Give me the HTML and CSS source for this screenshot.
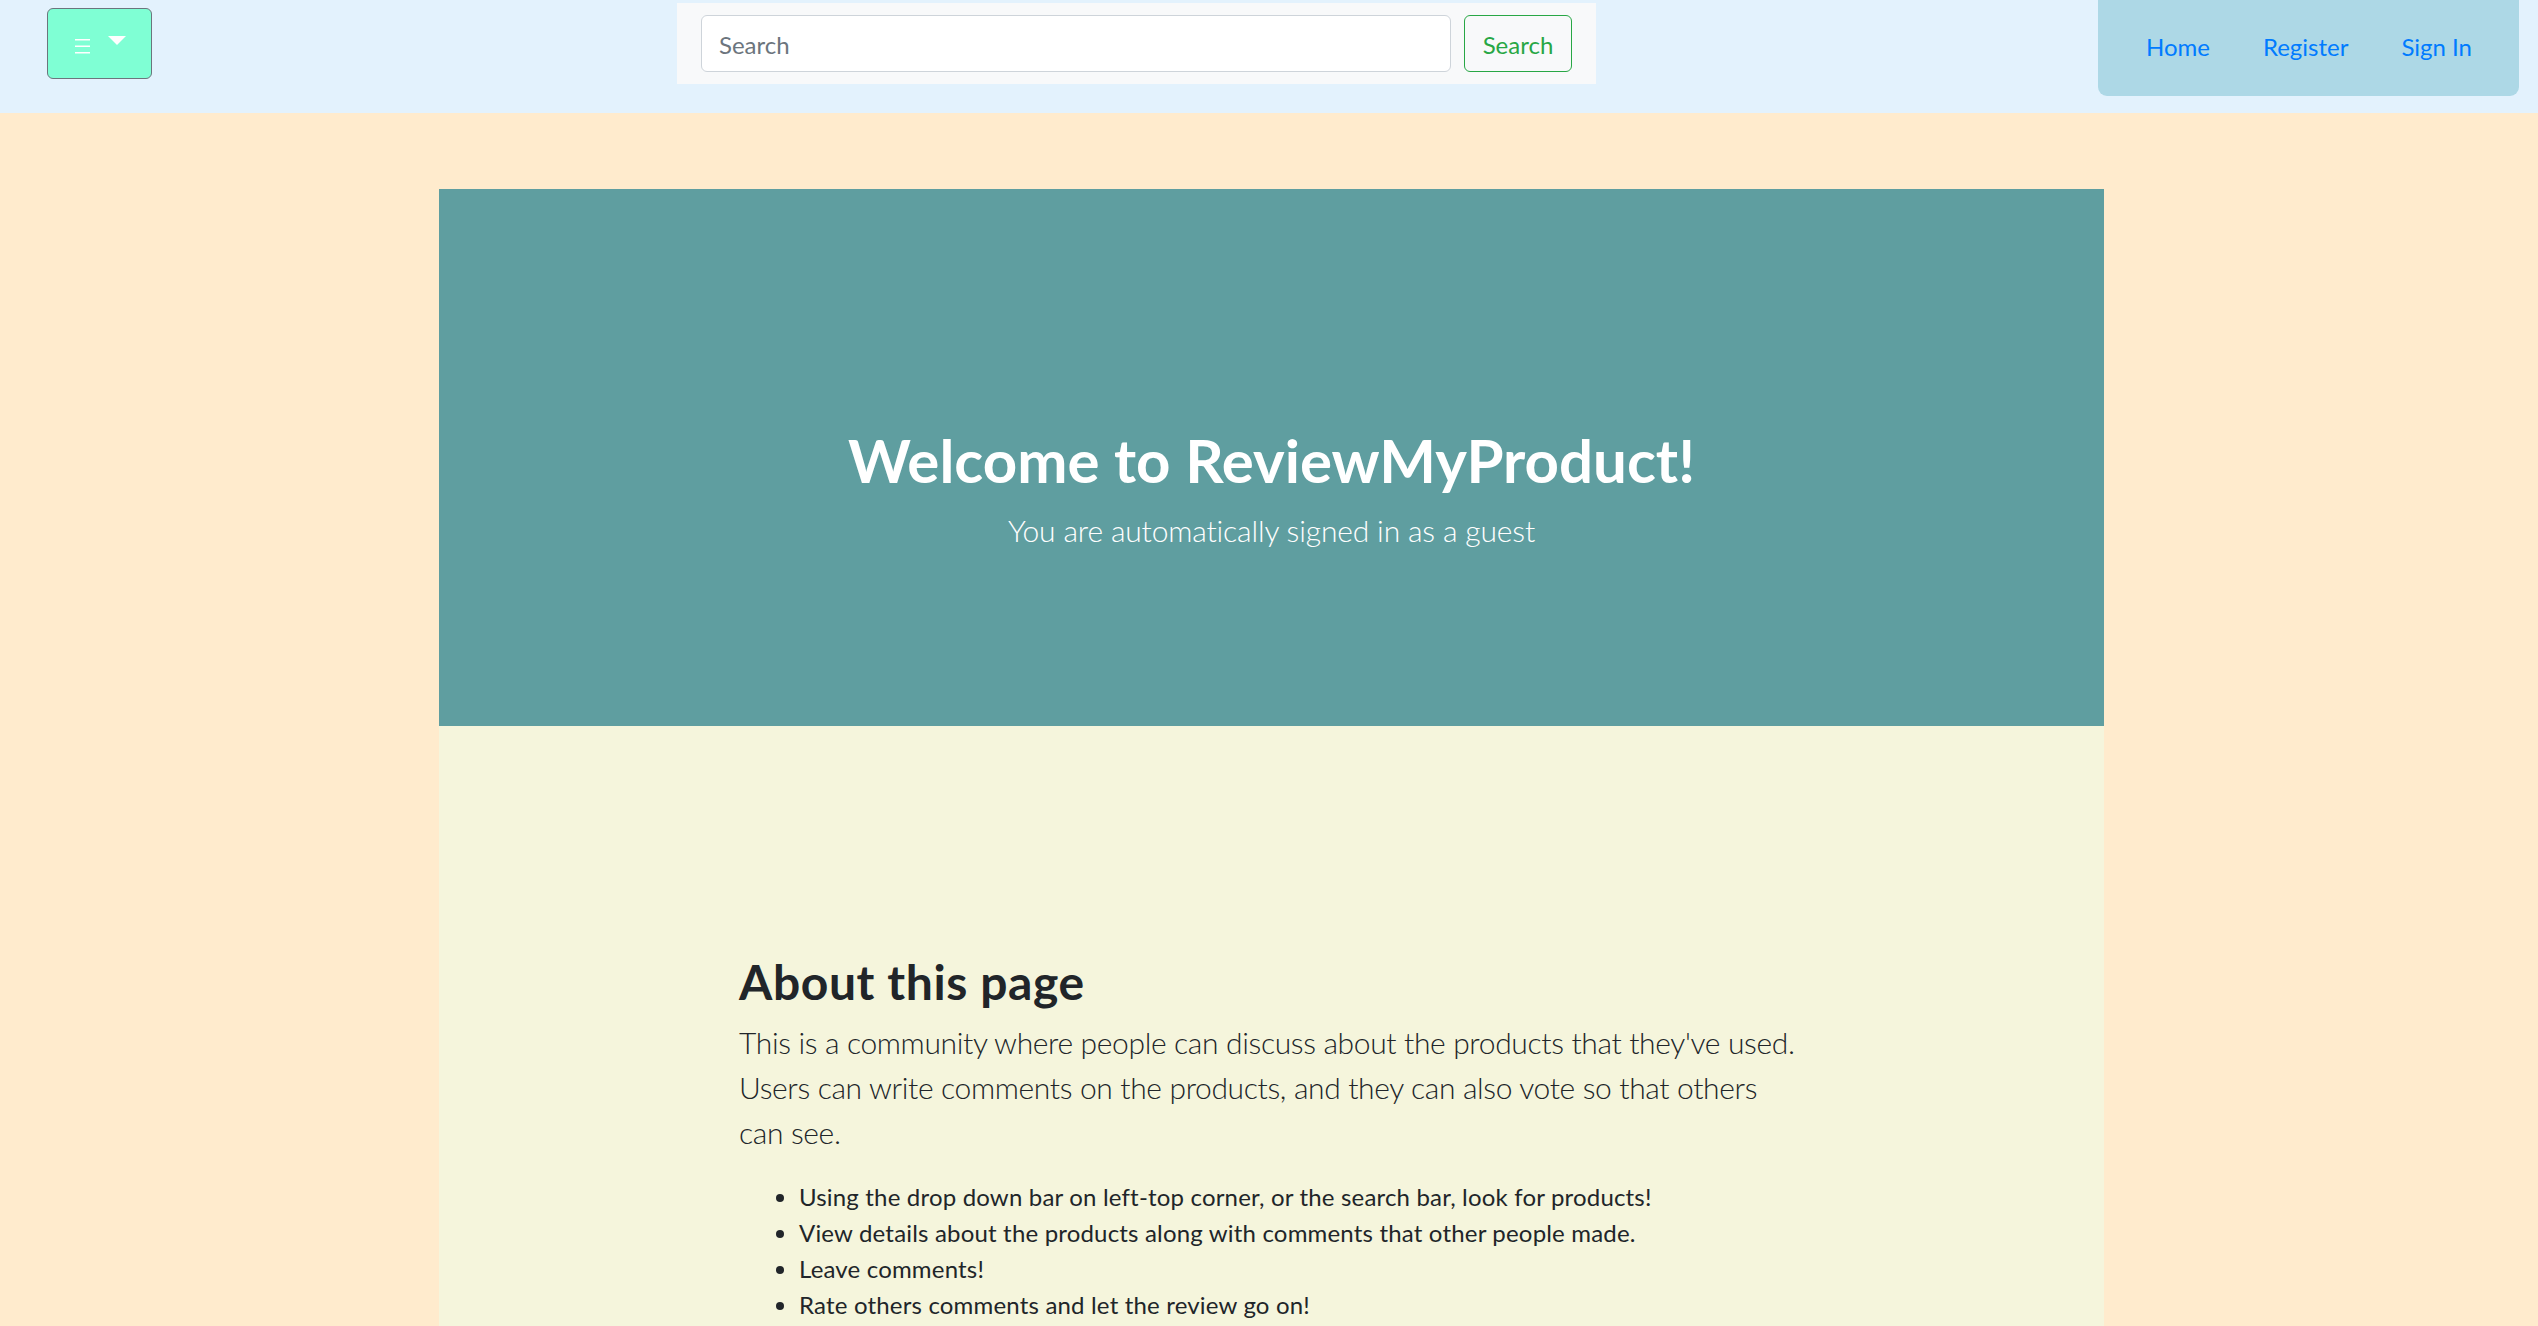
FILE: index.html
```html
<!DOCTYPE html>
<html lang="en">
<head>
<meta charset="utf-8">
<title>ReviewMyProduct</title>
<link rel="stylesheet" href="styles.css">
</head>
<body>
<header class="navbar">
  <button class="menu-btn" type="button" aria-label="Menu">
    <svg class="menu-icon" width="15" height="15" viewBox="0 0 15 15" aria-hidden="true">
      <rect x="0" y="0" width="15" height="1.5" fill="#fff"/>
      <rect x="0" y="6.5" width="15" height="1.5" fill="#fff"/>
      <rect x="0" y="13" width="15" height="1.5" fill="#fff"/>
    </svg>
    <span class="caret"></span>
  </button>
  <form class="search-form" onsubmit="return false">
    <input class="search-input" type="search" placeholder="Search">
    <button class="search-btn" type="submit">Search</button>
  </form>
  <nav class="nav-box">
    <a class="nav-link" href="#">Home</a>
    <a class="nav-link" href="#">Register</a>
    <a class="nav-link" href="#">Sign In</a>
  </nav>
</header>
<main class="page">
  <section class="hero">
    <h1 class="hero-title">Welcome to ReviewMyProduct!</h1>
    <p class="hero-lead">You are automatically signed in as a guest</p>
  </section>
  <section class="about">
    <div class="about-col">
      <h2 class="about-title">About this page</h2>
      <p class="about-lead">This is a community where people can discuss about the products that they've used. Users can write comments on the products, and they can also vote so that others can see.</p>
      <ul class="about-list">
        <li>Using the drop down bar on left-top corner, or the search bar, look for products!</li>
        <li>View details about the products along with comments that other people made.</li>
        <li>Leave comments!</li>
        <li>Rate others comments and let the review go on!</li>
      </ul>
    </div>
  </section>
</main>
</body>
</html>
```

FILE: styles.css
```css
* { box-sizing: border-box; }

html, body {
  margin: 0;
  padding: 0;
}

body {
  background: #ffebcd;
  font-family: "Lato", "Open Sans", "Noto Sans", sans-serif;
  color: #212529;
  font-size: 24px;
  line-height: 1.5;
}

.navbar {
  display: flex;
  align-items: flex-start;
  height: 113px;
  background: #e3f2fd;
}

.menu-btn {
  margin: 8px 0 0 47px;
  width: 105px;
  height: 71px;
  background: #7fffd4;
  border: 1.5px solid #6c757d;
  border-radius: 6px;
  display: flex;
  align-items: center;
  justify-content: center;
  gap: 18px;
  padding: 0 0 0 2px;
  cursor: pointer;
}

.menu-icon {
  display: block;
  margin-top: 5px;
}

.caret {
  display: block;
  width: 0;
  height: 0;
  border-top: 9px solid #fff;
  border-left: 9px solid transparent;
  border-right: 9px solid transparent;
  margin-top: -7px;
}

.search-form {
  margin: 3px 0 0 525px;
  width: 919px;
  height: 81px;
  background: #f8f9fa;
  display: flex;
  align-items: center;
  gap: 13px;
  padding: 0 24px;
}

.search-input {
  width: 750px;
  height: 57px;
  border: 1.5px solid #ced4da;
  border-radius: 6px;
  background: #fff;
  padding: 2px 17px 0;
  font-family: inherit;
  font-size: 24px;
  color: #495057;
  outline: none;
}

.search-input::placeholder {
  color: #6c757d;
}

.search-btn {
  width: 108px;
  height: 57px;
  border: 1.5px solid #28a745;
  border-radius: 6px;
  background: transparent;
  color: #28a745;
  font-family: inherit;
  font-size: 24px;
  padding: 2px 0 0;
  cursor: pointer;
}

.nav-box {
  margin-left: auto;
  margin-right: 19px;
  width: 421px;
  height: 96px;
  background: #add8e6;
  border-radius: 0 0 9px 9px;
  display: flex;
  align-items: center;
  justify-content: space-between;
  padding: 0 47px 3px 48px;
}

.nav-link {
  color: #007bff;
  text-decoration: none;
  font-size: 24px;
  line-height: 36px;
}

.page {
  width: 1665px;
  margin: 76px 0 0 439px;
}

.hero {
  height: 537px;
  background: #5f9ea0;
  color: #fff;
  text-align: center;
  padding-top: 235px;
}

.hero-title {
  margin: 0 0 12px;
  font-size: 60px;
  font-weight: 700;
  line-height: 72px;
}

.hero-lead {
  margin: 0;
  font-size: 30px;
  font-weight: 300;
  line-height: 45px;
  letter-spacing: -0.15px;
}

.about {
  background: #f5f5dc;
  padding: 227px 0 120px;
}

.about-col {
  width: 1060px;
  margin-left: 300px;
}

.about-title {
  margin: 0 0 9px;
  font-size: 48px;
  font-weight: 700;
  line-height: 57.6px;
  letter-spacing: 0.6px;
}

.about-lead {
  margin: 0 0 24px;
  font-size: 30px;
  font-weight: 300;
  line-height: 45px;
  letter-spacing: -0.35px;
}

.about-list {
  margin: 0;
  padding-left: 60px;
  font-size: 24px;
  line-height: 36px;
  letter-spacing: 0.18px;
}
```
